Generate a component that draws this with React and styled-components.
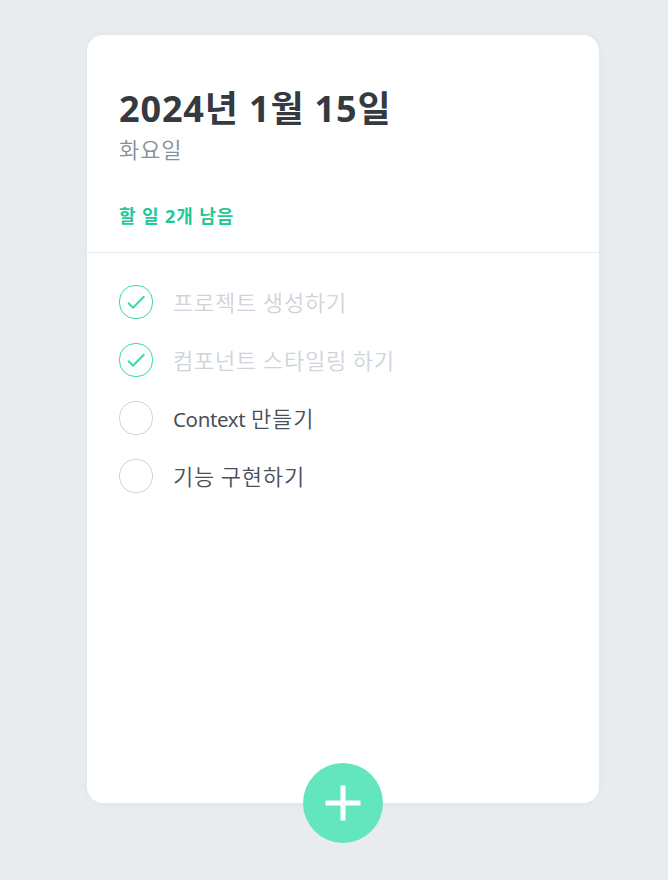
import { createContext, useContext, useReducer, useRef, useState } from "react";
import styled, { createGlobalStyle, css } from "styled-components";
import { MdAdd, MdDone } from "react-icons/md";

const initialTodos = [
  { id: 1, text: "프로젝트 생성하기", done: true },
  { id: 2, text: "컴포넌트 스타일링 하기", done: true },
  { id: 3, text: "Context 만들기", done: false },
  { id: 4, text: "기능 구현하기", done: false },
];

function todoReducer(state, action) {
  switch (action.type) {
    case "CREATE":
      return state.concat(action.todo);
    case "TOGGLE":
      return state.map((todo) =>
        todo.id === action.id ? { ...todo, done: !todo.done } : todo
      );
    default:
      return state;
  }
}

const TodoContext = createContext();

const TodoHead = () => {
  const { todos } = useContext(TodoContext);
  const undone = todos.filter((todo) => !todo.done);

  return (
    <StyledHead>
      <h1>2024년 1월 15일</h1>
      <div className="day">화요일</div>
      <div className="tasks-left">할 일 {undone.length}개 남음</div>
    </StyledHead>
  );
};

const TodoItem = ({ id, done, text }) => {
  const { dispatch } = useContext(TodoContext);

  return (
    <StyledItem>
      <CheckCircle $done={done} onClick={() => dispatch({ type: "TOGGLE", id })}>
        {done && <MdDone />}
      </CheckCircle>
      <Text $done={done}>
        {/* latin words are set smaller and tighter than hangul */}
        {text
          .split(/([A-Za-z]+)/)
          .map((part, i) => (i % 2 ? <Latin key={i}>{part}</Latin> : part))}
      </Text>
    </StyledItem>
  );
};

const TodoList = () => {
  const { todos } = useContext(TodoContext);

  return (
    <StyledList>
      {todos.map((todo) => (
        <TodoItem key={todo.id} id={todo.id} text={todo.text} done={todo.done} />
      ))}
    </StyledList>
  );
};

const TodoCreate = () => {
  const { dispatch } = useContext(TodoContext);
  const [open, setOpen] = useState(false);
  const [value, setValue] = useState("");
  const nextId = useRef(5);

  const onSubmit = (e) => {
    e.preventDefault();
    dispatch({
      type: "CREATE",
      todo: { id: nextId.current, text: value, done: false },
    });
    nextId.current += 1;
    setValue("");
    setOpen(false);
  };

  return (
    <>
      {open && (
        <InsertForm onSubmit={onSubmit}>
          <input
            autoFocus
            value={value}
            onChange={(e) => setValue(e.target.value)}
          />
        </InsertForm>
      )}
      <CircleButton $open={open} onClick={() => setOpen(!open)}>
        <MdAdd />
      </CircleButton>
    </>
  );
};

export default function App() {
  const [todos, dispatch] = useReducer(todoReducer, initialTodos);

  return (
    <TodoContext.Provider value={{ todos, dispatch }}>
      <GlobalStyle />
      <Page>
        <TodoTemplate>
          <TodoHead />
          <TodoList />
          <TodoCreate />
        </TodoTemplate>
      </Page>
    </TodoContext.Provider>
  );
}

const GlobalStyle = createGlobalStyle`
  * {
    box-sizing: border-box;
  }

  body {
    margin: 0;
    background: #e9ecef;
    font-family: "Noto Sans", "Noto Sans CJK KR", sans-serif;
  }
`;

const Page = styled.div`
  min-height: 100vh;
  padding: 35px 69px 0 87px;
`;

const TodoTemplate = styled.div`
  position: relative;
  display: flex;
  flex-direction: column;
  width: 512px;
  height: 768px;
  background: white;
  border-radius: 16px;
  box-shadow: 0 0 8px 0 rgba(0, 0, 0, 0.04);
`;

const StyledHead = styled.div`
  height: 218px;
  padding: 50px 32px 24px;
  border-bottom: 1px solid #e9ecef;

  h1 {
    margin: 0;
    color: #343a40;
    font-size: 36px;
    line-height: 48px;
    letter-spacing: 0.85px;
    white-space: nowrap;
  }

  .day {
    margin-top: 1px;
    color: #868e96;
    font-family: "Noto Sans CJK KR", sans-serif;
    font-size: 22px;
    font-weight: 350;
    line-height: 28px;
    letter-spacing: 0.9px;
  }

  .tasks-left {
    margin-top: 42px;
    color: #20c997;
    font-size: 18px;
    line-height: 24px;
    font-weight: bold;
    letter-spacing: 0.9px;
  }
`;

const StyledList = styled.div`
  flex: 1;
  padding: 20px 32px 48px;
  overflow-y: auto;
`;

const StyledItem = styled.div`
  display: flex;
  align-items: center;
  padding: 12px 0;
`;

const CheckCircle = styled.div`
  display: flex;
  align-items: center;
  justify-content: center;
  width: 34px;
  height: 34px;
  margin-right: 20px;
  border: 1px solid #ced4da;
  border-radius: 16px;
  font-size: 24px;
  cursor: pointer;

  ${(props) =>
    props.$done &&
    css`
      border-color: #38d9a9;
      color: #38d9a9;
    `}
`;

const Text = styled.div`
  flex: 1;
  padding-bottom: 2px;
  color: ${(props) => (props.$done ? "#ced4da" : "#495057")};
  font-family: "Noto Sans CJK KR", sans-serif;
  font-size: 22px;
  font-weight: 350;
  line-height: 28px;
  letter-spacing: 0.8px;
  white-space: nowrap;
`;

const Latin = styled.span`
  font-family: "Noto Sans", sans-serif;
  font-size: 20.5px;
  font-weight: 400;
  line-height: 1;
  letter-spacing: -0.35px;
`;

const CircleButton = styled.button`
  position: absolute;
  left: 50%;
  bottom: 0;
  display: flex;
  align-items: center;
  justify-content: center;
  width: 80px;
  height: 80px;
  padding: 0;
  border: none;
  border-radius: 50%;
  background: ${(props) => (props.$open ? "#ff8787" : "#63e6be")};
  color: white;
  font-size: 60px;
  transform: translate(-50%, 50%);
  cursor: pointer;
`;

const InsertForm = styled.form`
  padding: 32px 32px 72px;
  background: #f8f9fa;
  border-top: 1px solid #e9ecef;
  border-radius: 0 0 16px 16px;

  input {
    width: 100%;
    padding: 12px;
    border: 1px solid #dee2e6;
    border-radius: 4px;
    font-size: 18px;
  }
`;
